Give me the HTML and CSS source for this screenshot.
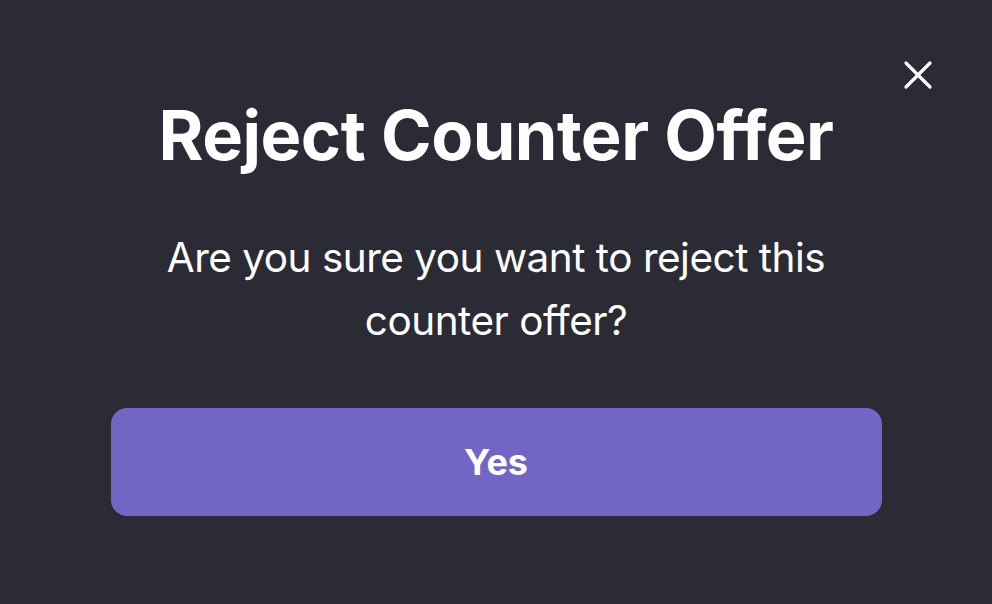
FILE: index.html
```html
<!DOCTYPE html>
<html lang="en">
<head>
  <meta charset="UTF-8">
  <meta name="viewport" content="width=device-width, initial-scale=1.0">
  <title>Reject Counter Offer</title>
  <link rel="stylesheet" href="styles.css">
</head>
<body>
  <div class="modal">
    <button class="close-button" aria-label="Close">
      <svg width="30" height="30" viewBox="0 0 30 30" fill="none" stroke="#fff" stroke-width="3.2" stroke-linecap="round">
        <path d="M3 3 L27 27 M27 3 L3 27" />
      </svg>
    </button>
    <h1 class="modal-title">Reject Counter Offer</h1>
    <p class="modal-text">Are you sure you want to reject this counter offer?</p>
    <button class="confirm-button">Yes</button>
  </div>
</body>
</html>
```

FILE: styles.css
```css
body {
  font-family: 'Inter', 'Noto Sans', sans-serif;
  margin: 0;
  background-color: #2a2b35; /* Dark slate background */
  width: 992px;
  height: 604px;
  overflow: hidden;
}

.modal {
  position: relative;
  display: flex;
  flex-direction: column;
  align-items: center;
  padding-top: 96px;
}

.close-button {
  position: absolute;
  top: 60px;
  right: 59px;
  background: none;
  border: none;
  padding: 0;
  cursor: pointer;
  display: flex;
}

.modal-title {
  margin: 0;
  color: #fff;
  font-size: 68.5px;
  font-weight: 700;
  letter-spacing: -0.5px;
  line-height: 80px;
}

.modal-text {
  margin: 50px 0 0;
  width: 720px;
  text-align: center;
  color: #fff;
  font-size: 40.5px;
  font-weight: 400;
  line-height: 63px;
  letter-spacing: -0.5px;
}

.confirm-button {
  margin-top: 56px;
  width: 771px;
  height: 108px;
  background-color: #7266c4; /* Soft purple */
  color: #fff;
  border: none;
  border-radius: 16px;
  font-family: inherit;
  font-size: 36px;
  font-weight: 700;
  cursor: pointer;
}
```
